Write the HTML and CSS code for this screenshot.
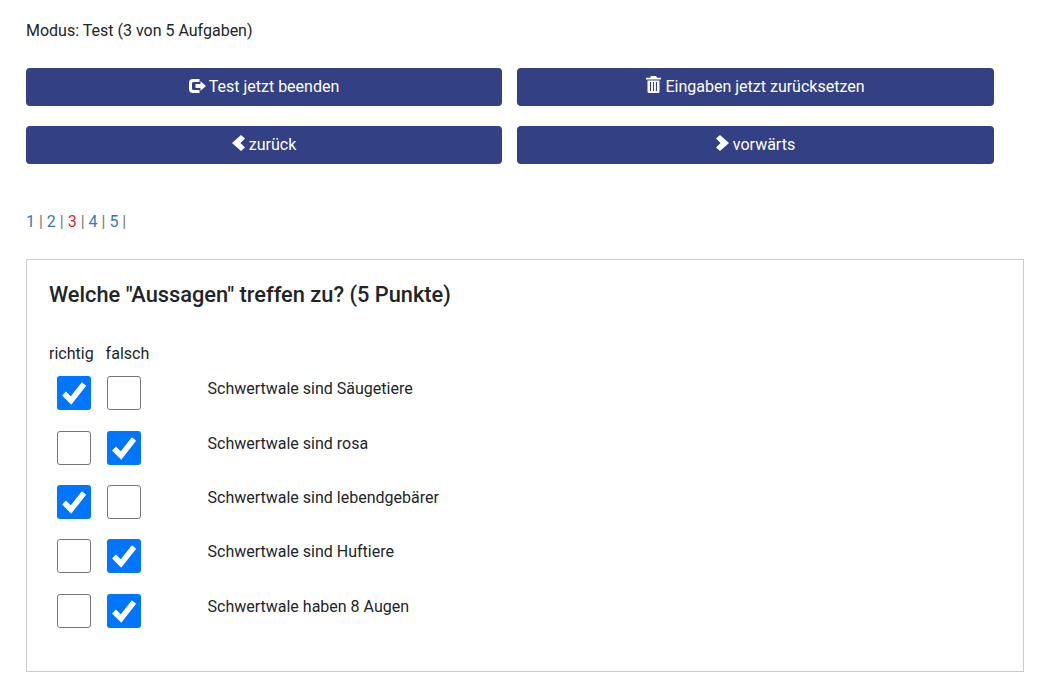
FILE: index.html
```html
<!DOCTYPE html>
<html lang="de">
<head>
    <meta charset="UTF-8">
    <title>Test</title>
    <link rel="stylesheet" href="styles.css">
</head>
<body>
    <p class="mode">Modus: Test (3 von 5 Aufgaben)</p>

    <div class="button-grid">
        <button class="btn">
            <svg class="icon icon-exit" width="17" height="14" viewBox="0 0 17 14"><path d="M10.500 0H4A4 4 0 0 0 0 4v6a4 4 0 0 0 4 4h6.500v-3H4.500A1.500 1.500 0 0 1 3 9.500v-5A1.500 1.500 0 0 1 4.500 3h6z"/><path d="M11.500 2.200 17 7l-5.500 4.800V9H6.500V5h5z"/></svg>
            Test jetzt beenden
        </button>
        <button class="btn">
            <svg class="icon icon-trash" width="15" height="17" viewBox="0 0 15 17"><path d="M5 0h5l1 1.800h4v1.700H0V1.800h4z"/><path fill-rule="evenodd" d="M1.500 4.500h12v11A1.500 1.500 0 0 1 12 17H3a1.500 1.500 0 0 1-1.500-1.500zM4 6v9h1.100V6zm2.950 0v9h1.100V6zM9.900 6v9H11V6z"/></svg>
            Eingaben jetzt zurücksetzen
        </button>
        <button class="btn">
            <svg class="icon icon-chevron" width="13" height="16" viewBox="0 0 13 16"><path d="M9 0l4 3.500L8.500 8l4.500 4.500L9 16 0 8z"/></svg>
            zurück
        </button>
        <button class="btn">
            <svg class="icon icon-chevron" width="13" height="16" viewBox="0 0 13 16"><path d="M4 0L0 3.500 4.500 8 0 12.500 4 16l9-8z"/></svg>
            vorwärts
        </button>
    </div>

    <div class="pagination">
        <a href="#">1</a> <span class="sep">|</span>
        <a href="#">2</a> <span class="sep">|</span>
        <a href="#" class="current">3</a> <span class="sep">|</span>
        <a href="#">4</a> <span class="sep">|</span>
        <a href="#">5</a> <span class="sep">|</span>
    </div>

    <div class="card">
        <h2 class="question">Welche "Aussagen" treffen zu? (5 Punkte)</h2>

        <div class="answers">
            <div class="answers-head">
                <span>richtig</span>
                <span>falsch</span>
            </div>

            <div class="answer">
                <span class="box checked"><svg width="26" height="24" viewBox="0 0 26 24"><path d="M3 12.500l7 7L23 3"/></svg></span>
                <span class="box"></span>
                <span class="answer-text">Schwertwale sind Säugetiere</span>
            </div>
            <div class="answer">
                <span class="box"></span>
                <span class="box checked"><svg width="26" height="24" viewBox="0 0 26 24"><path d="M3 12.500l7 7L23 3"/></svg></span>
                <span class="answer-text">Schwertwale sind rosa</span>
            </div>
            <div class="answer">
                <span class="box checked"><svg width="26" height="24" viewBox="0 0 26 24"><path d="M3 12.500l7 7L23 3"/></svg></span>
                <span class="box"></span>
                <span class="answer-text">Schwertwale sind lebendgebärer</span>
            </div>
            <div class="answer">
                <span class="box"></span>
                <span class="box checked"><svg width="26" height="24" viewBox="0 0 26 24"><path d="M3 12.500l7 7L23 3"/></svg></span>
                <span class="answer-text">Schwertwale sind Huftiere</span>
            </div>
            <div class="answer">
                <span class="box"></span>
                <span class="box checked"><svg width="26" height="24" viewBox="0 0 26 24"><path d="M3 12.500l7 7L23 3"/></svg></span>
                <span class="answer-text">Schwertwale haben 8 Augen</span>
            </div>
        </div>
    </div>
</body>
</html>
```

FILE: styles.css
```css
body {
    margin: 0;
    padding: 0 27px 0 26px;
    font-family: Roboto, sans-serif;
    font-size: 16px;
    line-height: 24px;
    color: #212529;
    background-color: white;
}
.mode {
    margin: 0;
    padding-top: 19px;
}
.button-grid {
    display: grid;
    grid-template-columns: 476px 477px;
    column-gap: 15px;
    row-gap: 20px;
    margin-top: 25px;
}
.btn {
    display: flex;
    align-items: center;
    justify-content: center;
    height: 38px;
    padding: 0 0 2px;
    border: none;
    border-radius: 4px;
    background-color: #334084;
    color: white;
    font-family: Roboto, sans-serif;
    font-size: 16px;
    font-weight: 400;
}
.icon {
    fill: white;
}
.icon-exit {
    margin-right: 3px;
}
.icon-trash {
    margin-right: 4px;
    margin-bottom: 3px;
}
.icon-chevron {
    margin-right: 4px;
    margin-bottom: 2px;
}
.pagination {
    margin-top: 46px;
    color: #7a7a6a;
}
.pagination a {
    color: #337ab7;
    text-decoration: none;
}
.pagination a.current {
    color: #dc2a2a;
}
.card {
    margin-top: 25px;
    height: 411px;
    padding: 0 22px;
    border: 1px solid #ccc;
}
.question {
    margin: 0;
    padding-top: 21px;
    font-size: 21.800px;
    line-height: 28px;
    font-weight: 500;
}
.answers {
    margin-top: 33px;
}
.answers-head {
    display: flex;
    gap: 12px;
    height: 24px;
    margin-bottom: 10.200px;
}
.answer {
    display: flex;
    align-items: flex-start;
    height: 54.400px;
    padding-left: 8px;
}
.box {
    flex: none;
    display: flex;
    align-items: center;
    justify-content: center;
    box-sizing: border-box;
    width: 34px;
    height: 34px;
    margin-right: 16px;
    border: 1px solid #767676;
    border-radius: 3px;
}
.box.checked {
    border: none;
    background-color: #0075ff;
}
.box svg {
    fill: none;
    stroke: white;
    stroke-width: 5.500;
}
.answer-text {
    margin-left: 50.500px;
    margin-top: 1px;
}
```
